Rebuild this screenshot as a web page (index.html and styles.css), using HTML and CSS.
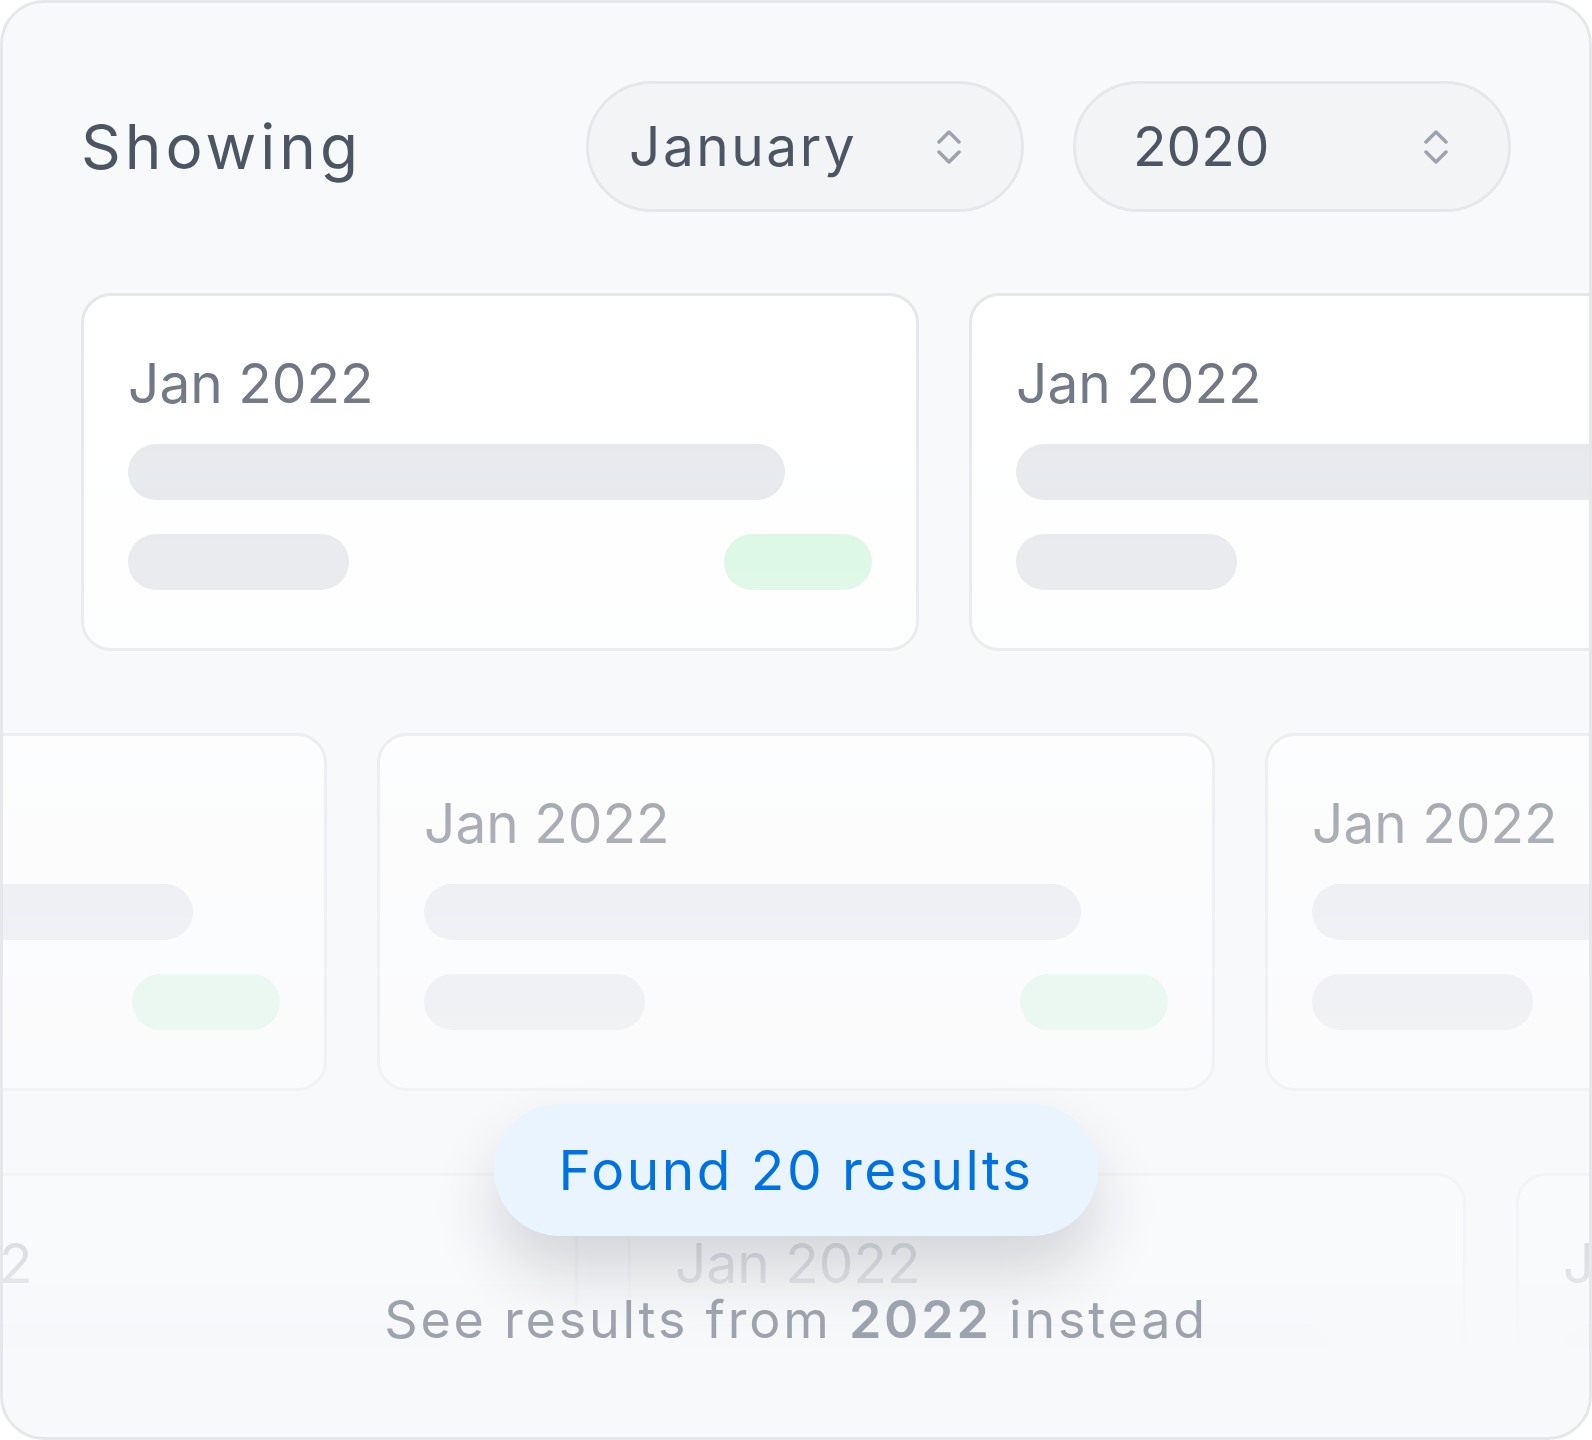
FILE: index.html
```html
<!DOCTYPE html>
<html lang="en">
<head>
  <meta charset="UTF-8">
  <title>Showing results</title>
  <link rel="stylesheet" href="styles.css">
</head>
<body>
  <div class="frame">
    <div class="header">
      <span class="showing">Showing</span>
      <div class="select select-month">
        <span class="select-value">January</span>
        <svg class="chevrons" width="24" height="36" viewBox="0 0 24 36">
          <polyline points="2,13 12,3 22,13" />
          <polyline points="2,23 12,33 22,23" />
        </svg>
      </div>
      <div class="select select-year">
        <span class="select-value">2020</span>
        <svg class="chevrons" width="24" height="36" viewBox="0 0 24 36">
          <polyline points="2,13 12,3 22,13" />
          <polyline points="2,23 12,33 22,23" />
        </svg>
      </div>
    </div>

    <div class="rows">
      <div class="row row-1">
        <div class="card">
          <div class="card-title">Jan 2022</div>
          <div class="bar bar-long"></div>
          <div class="card-foot">
            <div class="bar bar-short"></div>
            <div class="bar bar-green"></div>
          </div>
        </div>
        <div class="card">
          <div class="card-title">Jan 2022</div>
          <div class="bar bar-long"></div>
          <div class="card-foot">
            <div class="bar bar-short"></div>
            <div class="bar bar-green"></div>
          </div>
        </div>
      </div>

      <div class="row row-2">
        <div class="card">
          <div class="card-title">Jan 2022</div>
          <div class="bar bar-long"></div>
          <div class="card-foot">
            <div class="bar bar-short"></div>
            <div class="bar bar-green"></div>
          </div>
        </div>
        <div class="card">
          <div class="card-title">Jan 2022</div>
          <div class="bar bar-long"></div>
          <div class="card-foot">
            <div class="bar bar-short"></div>
            <div class="bar bar-green"></div>
          </div>
        </div>
        <div class="card">
          <div class="card-title">Jan 2022</div>
          <div class="bar bar-long"></div>
          <div class="card-foot">
            <div class="bar bar-short"></div>
            <div class="bar bar-green"></div>
          </div>
        </div>
      </div>

      <div class="row row-3">
        <div class="card">
          <div class="card-title">Jan 2022</div>
          <div class="bar bar-long"></div>
          <div class="card-foot">
            <div class="bar bar-short"></div>
            <div class="bar bar-green"></div>
          </div>
        </div>
        <div class="card">
          <div class="card-title">Jan 2022</div>
          <div class="bar bar-long"></div>
          <div class="card-foot">
            <div class="bar bar-short"></div>
            <div class="bar bar-green"></div>
          </div>
        </div>
        <div class="card">
          <div class="card-title">Jan 2022</div>
          <div class="bar bar-long"></div>
          <div class="card-foot">
            <div class="bar bar-short"></div>
            <div class="bar bar-green"></div>
          </div>
        </div>
      </div>
    </div>

    <div class="result">
      <div class="result-pill">Found 20 results</div>
      <p class="result-hint">See results from <b>2022</b> instead</p>
    </div>
  </div>
</body>
</html>
```

FILE: styles.css
```css
body {
  margin: 0;
  background: #fff;
  font-family: Inter, "Noto Sans", sans-serif;
}

.frame {
  position: relative;
  width: 1592px;
  height: 1440px;
  box-sizing: border-box;
  border: 3px solid #e5e7eb;
  border-radius: 44px;
  background: #f8f9fb;
  overflow: hidden;
}

/* top bar */
.header {
  display: flex;
  align-items: center;
  gap: 49px;
  padding: 78px 78px 0 78px;
}

.showing {
  flex: 1;
  font-size: 62px;
  letter-spacing: 4px;
  color: #4b5563;
  line-height: 1;
}

.select {
  display: flex;
  align-items: center;
  width: 438px;
  height: 131px;
  box-sizing: border-box;
  border: 3px solid #e5e7eb;
  border-radius: 66px;
  background: #f3f4f6;
  padding-right: 60px;
}

.select-month {
  padding-left: 40px;
}

.select-year {
  padding-left: 57px;
}

.select-value {
  flex: 1;
  font-size: 55px;
  line-height: 1;
  color: #4b5563;
}

.select-month .select-value {
  letter-spacing: 2.5px;
}

.chevrons polyline {
  fill: none;
  stroke: #9ca3af;
  stroke-width: 3.5;
  stroke-linecap: round;
  stroke-linejoin: round;
}

/* cards */
.rows {
  display: flex;
  flex-direction: column;
  gap: 82px;
  margin-top: 81px;
  -webkit-mask-image: linear-gradient(to bottom, #000 40px, rgba(0, 0, 0, 0.57) 522px, rgba(0, 0, 0, 0.18) 972px, transparent 1065px);
  mask-image: linear-gradient(to bottom, #000 40px, rgba(0, 0, 0, 0.57) 522px, rgba(0, 0, 0, 0.18) 972px, transparent 1065px);
}

.row {
  display: flex;
  gap: 50px;
}

.row-1 { margin-left: 78px; }
.row-2 { margin-left: -514px; }
.row-3 { margin-left: -263px; }

.card {
  flex: 0 0 838px;
  height: 358px;
  box-sizing: border-box;
  border: 3px solid #e5e7eb;
  border-radius: 30px;
  background: #fff;
  padding: 60px 44px 0 44px;
}

.card-title {
  font-size: 55px;
  line-height: 1;
  color: #6b7280;
  margin-bottom: 33px;
}

.bar {
  height: 56px;
  border-radius: 28px;
  background: #e5e7eb;
}

.bar-long {
  width: 657px;
}

.card-foot {
  display: flex;
  justify-content: space-between;
  margin-top: 34px;
}

.bar-short {
  width: 221px;
}

.bar-green {
  width: 148px;
  background: #d7f7e3;
}

/* floating result */
.result {
  position: absolute;
  left: 0;
  right: 0;
  top: 1101px;
  display: flex;
  flex-direction: column;
  align-items: center;
}

.result-pill {
  display: flex;
  align-items: center;
  justify-content: center;
  width: 604px;
  height: 132px;
  box-sizing: border-box;
  border-radius: 66px;
  background: #eaf4fe;
  color: #0071e3;
  font-size: 55px;
  letter-spacing: 2.5px;
  box-shadow: 0 36px 64px rgba(17, 24, 39, 0.16);
}

.result-hint {
  margin: 58px 0 0 0;
  font-size: 52px;
  letter-spacing: 2.8px;
  line-height: 1;
  color: #9ca3af;
}

.result-hint b {
  font-weight: 600;
}
```
